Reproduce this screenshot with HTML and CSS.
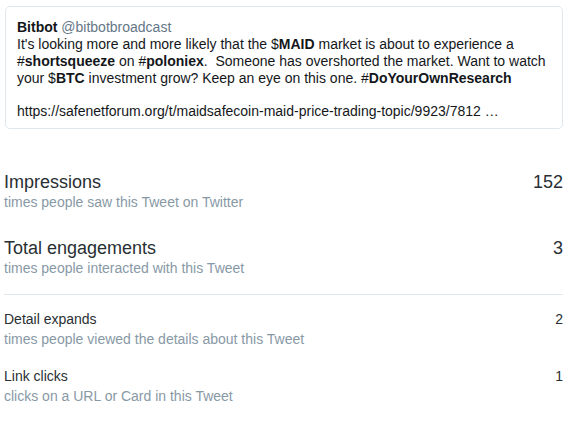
FILE: index.html
```html
<!DOCTYPE html>
<html>
<head>
<meta charset="utf-8">
<link rel="stylesheet" href="styles.css">
</head>
<body>
<div class="page">
  <div class="tweet">
    <div class="head"><span class="name">Bitbot</span> <span class="handle">@bitbotbroadcast</span></div>
    <div class="text">It's looking more and more likely that the $<b>MAID</b> market is about to experience a #<b>shortsqueeze</b> on #<b>poloniex</b>.&nbsp; Someone has overshorted the market. Want to watch your $<b>BTC</b> investment grow? Keep an eye on this one. #<b>DoYourOwnResearch</b><br><br>https://safenetforum.org/t/maidsafecoin-maid-price-trading-topic/9923/7812 …</div>
  </div>
  <div class="stats">
    <div class="stat big">
      <div class="info"><div class="title">Impressions</div><div class="desc">times people saw this Tweet on Twitter</div></div>
      <div class="num">152</div>
    </div>
    <div class="stat big">
      <div class="info"><div class="title">Total engagements</div><div class="desc">times people interacted with this Tweet</div></div>
      <div class="num">3</div>
    </div>
  </div>
  <div class="stats small-list">
    <div class="stat small">
      <div class="info"><div class="title">Detail expands</div><div class="desc">times people viewed the details about this Tweet</div></div>
      <div class="num">2</div>
    </div>
    <div class="stat small">
      <div class="info"><div class="title">Link clicks</div><div class="desc">clicks on a URL or Card in this Tweet</div></div>
      <div class="num">1</div>
    </div>
  </div>
</div>
</body>
</html>
```
FILE: styles.css
```css
html, body {
  margin: 0;
  padding: 0;
  background: #fff;
}
body {
  font-family: "Liberation Sans", Arial, sans-serif;
  color: #14171a;
}
.page {
  padding: 6px 12px 0 4px;
}
.tweet {
  margin-left: 1px;
  border: 1px solid #e1e8ed;
  border-radius: 5px;
  padding: 11px 11px 8px 11px;
  font-size: 14px;
  line-height: 16.8px;
}
.head {
  line-height: 18px;
}
.name {
  font-weight: bold;
  color: #14171a;
}
.handle {
  color: #657786;
}
.text b {
  font-weight: bold;
}
.stats {
  padding-top: 42px;
  padding-bottom: 17px;
  border-bottom: 1px solid #e1e8ed;
}
.stat {
  display: flex;
  justify-content: space-between;
  align-items: flex-start;
}
.stat.big + .stat.big {
  margin-top: 26px;
}
.big .title,
.big .num {
  font-size: 18px;
  line-height: 22px;
  color: #292f33;
}
.desc {
  font-size: 14px;
  line-height: 18px;
  color: #8899a6;
}
.small-list {
  border-bottom: none;
  padding-top: 13px;
}
.small .title,
.small .num {
  font-size: 14px;
  line-height: 22px;
  color: #292f33;
}
.stat.small + .stat.small {
  margin-top: 17px;
}
```
